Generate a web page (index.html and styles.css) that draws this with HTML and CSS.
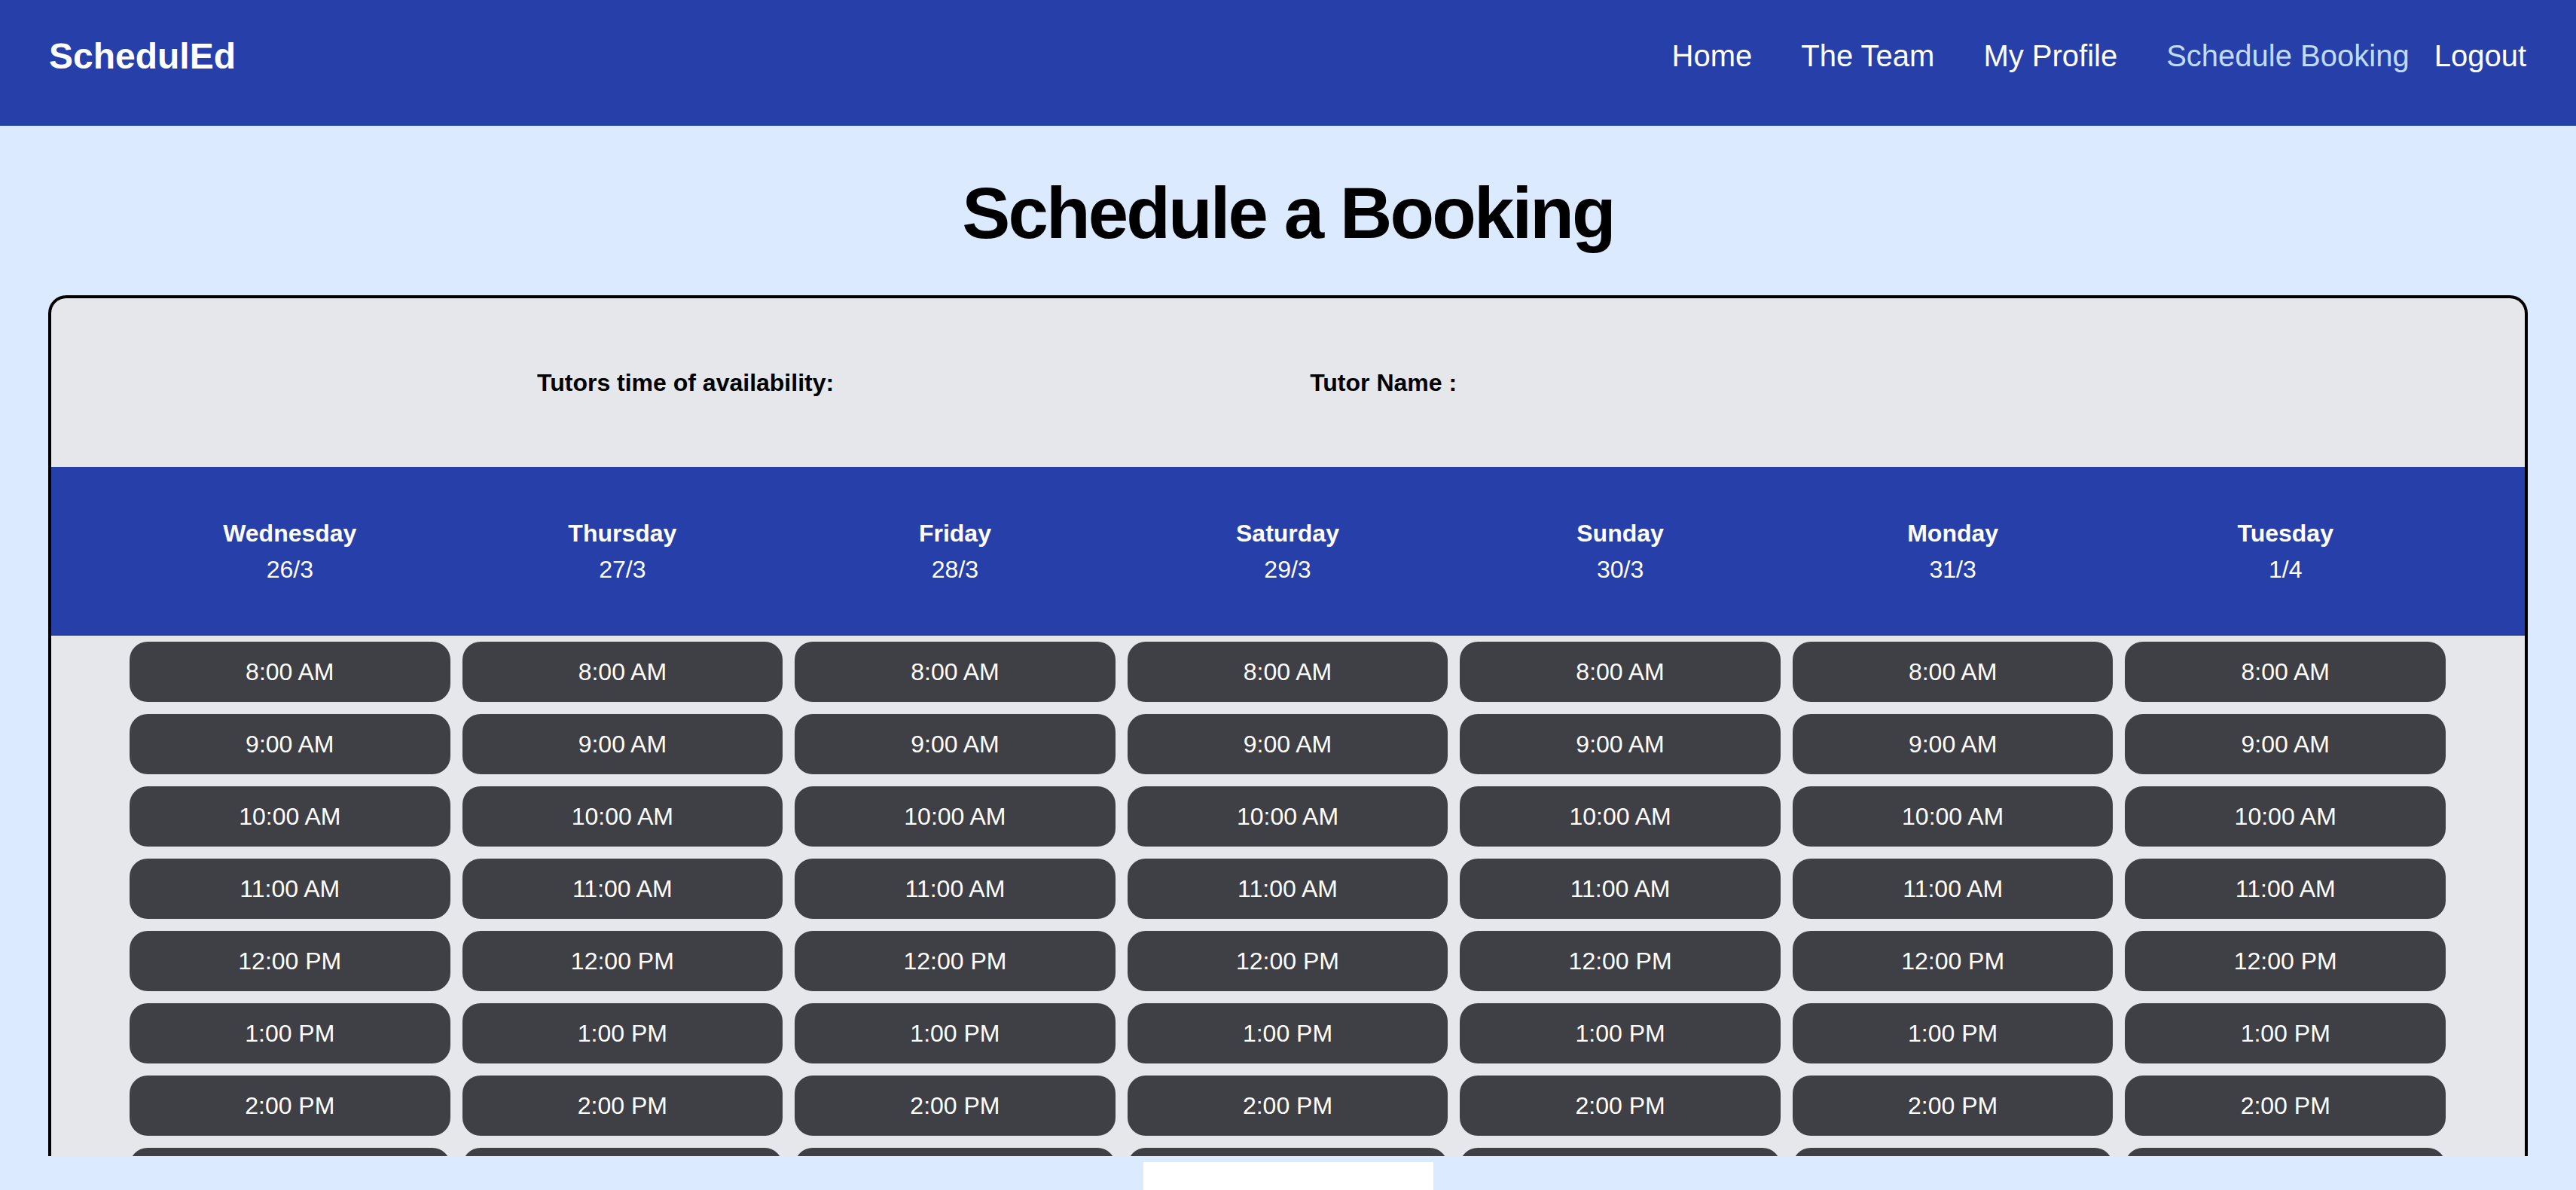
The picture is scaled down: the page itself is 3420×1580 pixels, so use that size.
FILE: index.html
```html
<!DOCTYPE html>
<html lang="en">
<head>
<meta charset="utf-8">
<title>ScheduledEd - Schedule a Booking</title>
<link rel="stylesheet" href="styles.css">
</head>
<body>
<nav class="navbar">
  <a class="logo" href="#">SchedulEd</a>
  <ul class="nav-links">
    <li><a href="#">Home</a></li>
    <li><a href="#">The Team</a></li>
    <li><a href="#">My Profile</a></li>
    <li class="tight"><a class="active" href="#">Schedule Booking</a></li>
    <li><a href="#">Logout</a></li>
  </ul>
</nav>
<main class="page">
  <h1 class="title">Schedule a Booking</h1>
  <section class="card">
    <div class="info">
      <span class="info-label">Tutors time of availability:</span>
      <span class="info-label">Tutor Name :</span>
    </div>
    <div class="days">
      <div class="grid">
        <div class="day"><div class="day-name">Wednesday</div><div class="day-date">26/3</div></div>
        <div class="day"><div class="day-name">Thursday</div><div class="day-date">27/3</div></div>
        <div class="day"><div class="day-name">Friday</div><div class="day-date">28/3</div></div>
        <div class="day"><div class="day-name">Saturday</div><div class="day-date">29/3</div></div>
        <div class="day"><div class="day-name">Sunday</div><div class="day-date">30/3</div></div>
        <div class="day"><div class="day-name">Monday</div><div class="day-date">31/3</div></div>
        <div class="day"><div class="day-name">Tuesday</div><div class="day-date">1/4</div></div>
      </div>
    </div>
    <div class="slots grid" id="slots"></div>
  </section>
  <div class="submit-box"></div>
</main>
<script src="script.js"></script>
</body>
</html>
```

FILE: script.js
```js
(function () {
  var times = ["8:00 AM", "9:00 AM", "10:00 AM", "11:00 AM", "12:00 PM", "1:00 PM", "2:00 PM", "3:00 PM", "4:00 PM", "5:00 PM"];
  var grid = document.getElementById("slots");
  times.forEach(function (t) {
    for (var d = 0; d < 7; d++) {
      var b = document.createElement("button");
      b.className = "slot";
      b.textContent = t;
      grid.appendChild(b);
    }
  });
})();
```

FILE: styles.css
```css
* { box-sizing: border-box; }

html, body {
  margin: 0;
  padding: 0;
}

body {
  background: #dbeafe;
  font-family: "Liberation Sans", Arial, sans-serif;
  color: #000;
  height: 1580px;
  overflow: hidden;
}

.navbar {
  height: 167px;
  background: #2740a9;
  display: flex;
  justify-content: space-between;
  align-items: center;
  padding: 0 66px 18px 65px;
}

.logo {
  color: #fff;
  font-weight: 700;
  font-size: 48px;
  text-decoration: none;
}

.nav-links {
  list-style: none;
  margin: 0;
  padding: 0;
  display: flex;
  gap: 65px;
}

.nav-links li.tight {
  margin-right: -32px;
}

.nav-links a {
  color: #fff;
  font-size: 40px;
  text-decoration: none;
}

.nav-links a.active {
  color: #bfdbfe;
}

.page {
  display: flex;
  flex-direction: column;
  align-items: stretch;
}

.title {
  margin: 68px 0 61px;
  text-align: center;
  font-size: 96px;
  line-height: 96px;
  font-weight: 700;
  letter-spacing: -2.9px;
}

.card {
  margin: 0 64px;
  height: 1143px;
  border: 4px solid #000;
  border-bottom: none;
  border-radius: 24px 24px 0 0;
  background: #e5e7eb;
  overflow: hidden;
}

.info {
  height: 224px;
  display: flex;
  align-items: center;
  padding-left: 645px;
  gap: 632px;
}

.info-label {
  font-weight: 700;
  font-size: 32px;
}

.days {
  background: #2740a9;
  height: 224px;
  display: flex;
  align-items: center;
}

.grid {
  display: grid;
  grid-template-columns: repeat(7, 1fr);
  column-gap: 16px;
  padding: 0 105px 0 104px;
  width: 100%;
}

.day {
  color: #fff;
  text-align: center;
  font-size: 32px;
  line-height: 48px;
}

.day-name {
  font-weight: 700;
}

.slots {
  padding-top: 8px;
  row-gap: 16px;
}

.slot {
  height: 80px;
  border: none;
  border-radius: 24px;
  background: #3f3f46;
  color: #fff;
  font-family: "Liberation Sans", Arial, sans-serif;
  font-size: 32px;
  padding: 0;
}

.submit-box {
  align-self: center;
  margin-top: 8px;
  width: 385px;
  height: 60px;
  background: #fff;
}
```
